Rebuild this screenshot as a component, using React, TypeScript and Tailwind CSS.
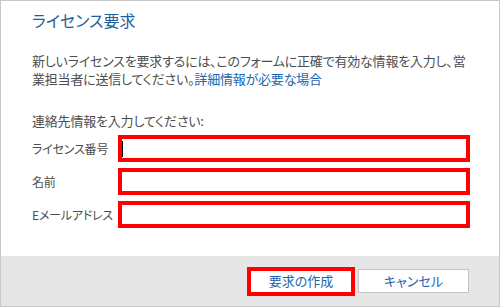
const jp = "font-['Noto_Sans_CJK_JP','Noto_Sans',sans-serif] [font-feature-settings:'palt']";

function Field({ label, focused }: { label: string; focused?: boolean }) {
  return (
    <div className="flex h-[27px] items-center">
      <span className="w-[86px] shrink-0 whitespace-nowrap text-[12px] leading-none tracking-[-0.2px] text-[#4d4d4d]">{label}</span>
      <div className="flex h-full w-[352px] items-center border-4 border-[#ff0000] bg-white">
        {focused && <span className="h-[16px] w-px bg-black" />}
      </div>
    </div>
  );
}

export default function App() {
  return (
    <div className={`flex h-[307px] w-[500px] flex-col border border-[#c8c8c8] bg-white ${jp}`}>
      <div className="flex-1 pl-[31px] pt-[7px]">
        <h1 className="text-[16px] leading-[24px] font-normal text-[#1e5e9c]">ライセンス要求</h1>
        <p className="mt-[20px] whitespace-nowrap text-[13px] leading-[18px] tracking-[-0.2px] text-[#4d4d4d]">
          新しいライセンスを要求するには、このフォームに正確で有効な情報を入力し、営
          <br />
          業担当者に送信してください。<span className="text-[#1a64b0]">詳細情報が必要な場合</span>
        </p>
        <p className="mt-[24px] text-[13px] leading-[18px] tracking-[-0.2px] text-[#4d4d4d]">連絡先情報を入力してください:</p>
        <div className="mt-[5px] flex flex-col gap-[6px]">
          <Field label="ライセンス番号" focused />
          <Field label="名前" />
          <Field label="Eメールアドレス" />
        </div>
      </div>
      <div className="flex h-[50px] items-center justify-end gap-[3px] bg-[#e6e6e6] pr-[30px]">
        <button type="button" className="flex h-[29px] w-[108px] items-center justify-center border-4 border-[#ff0000] bg-white text-[13px] text-[#1e64aa]">
          要求の作成
        </button>
        <button type="button" className="flex h-[24px] w-[111px] items-center justify-center border border-[#c4c4c4] bg-white text-[13px] text-[#1e64aa]">
          キャンセル
        </button>
      </div>
    </div>
  );
}
